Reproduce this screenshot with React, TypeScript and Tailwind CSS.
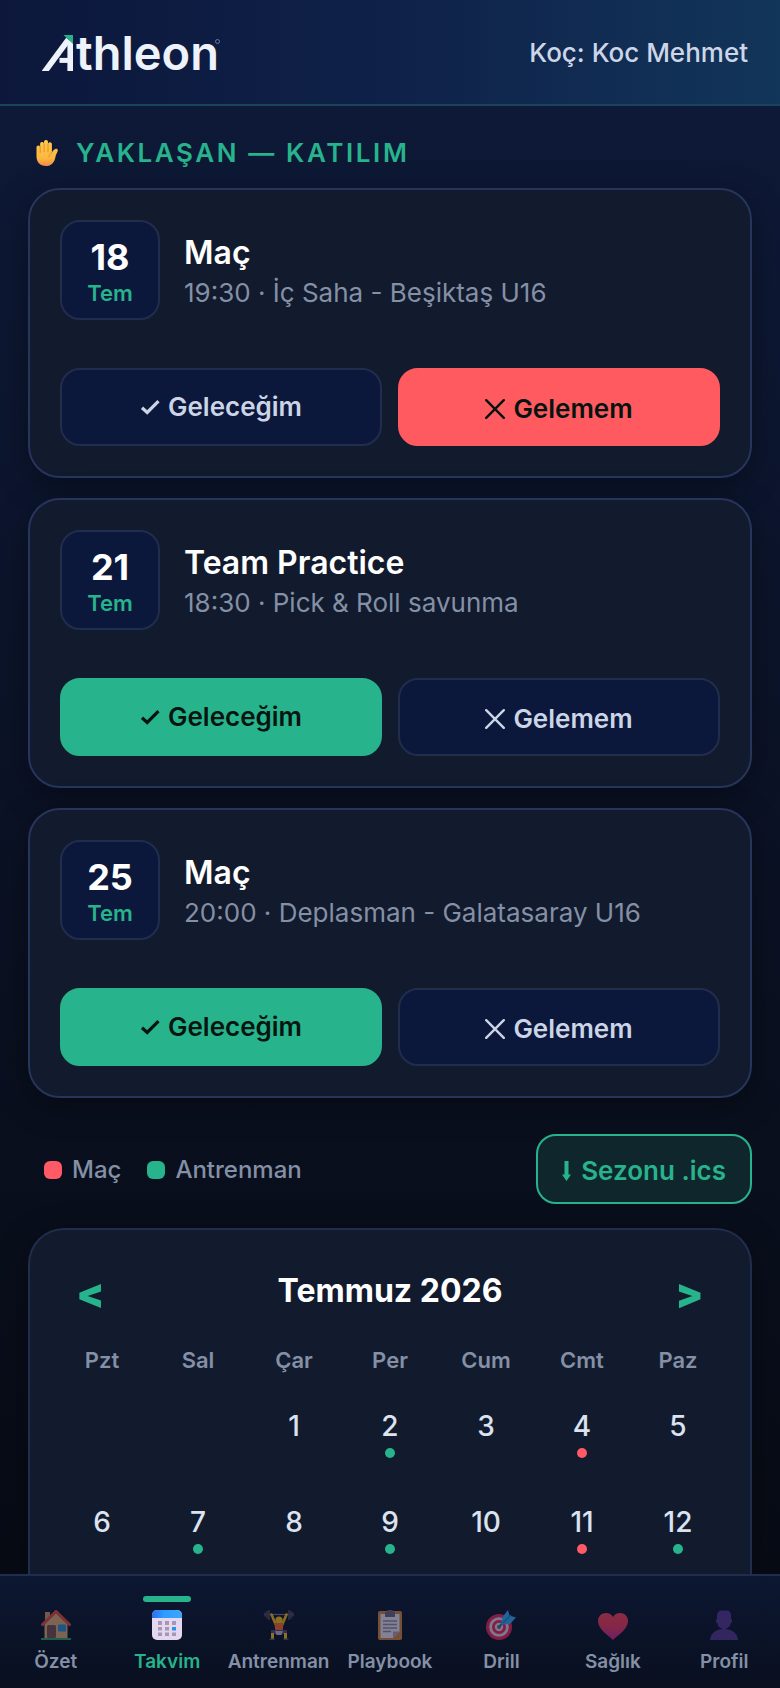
import React from "react";

type Answer = "yes" | "no";

interface UpcomingEvent {
  day: string;
  month: string;
  title: string;
  detail: string;
  answer: Answer;
}

interface CalendarDay {
  day: number | null;
  kind?: "match" | "training";
}

const events: UpcomingEvent[] = [
  {
    day: "18",
    month: "Tem",
    title: "Maç",
    detail: "19:30 · İç Saha - Beşiktaş U16",
    answer: "no",
  },
  {
    day: "21",
    month: "Tem",
    title: "Team Practice",
    detail: "18:30 · Pick & Roll savunma",
    answer: "yes",
  },
  {
    day: "25",
    month: "Tem",
    title: "Maç",
    detail: "20:00 · Deplasman - Galatasaray U16",
    answer: "yes",
  },
];

const weekdays = ["Pzt", "Sal", "Çar", "Per", "Cum", "Cmt", "Paz"];

const weeks: CalendarDay[][] = [
  [
    { day: null },
    { day: null },
    { day: 1 },
    { day: 2, kind: "training" },
    { day: 3 },
    { day: 4, kind: "match" },
    { day: 5 },
  ],
  [
    { day: 6 },
    { day: 7, kind: "training" },
    { day: 8 },
    { day: 9, kind: "training" },
    { day: 10 },
    { day: 11, kind: "match" },
    { day: 12, kind: "training" },
  ],
];

const Logo = () => (
  <a href="#" aria-label="Athleon" className="flex items-end text-[#eef2fb]">
    <svg width="32" height="36" viewBox="0 0 32 36" fill="none" aria-hidden="true">
      <path d="M1 39 L26.5 4.500" stroke="currentColor" strokeWidth="5.8" />
      <path d="M28.200 6 V36" stroke="currentColor" strokeWidth="5.6" />
      <path d="M17.500 25.400 H27" stroke="currentColor" strokeWidth="5" />
      <path d="M21.500 0 H31 V9 Z" fill="#27b18b" />
    </svg>
    <span className="ml-[2px] -mb-[2px] text-[47px] leading-[40px] font-semibold">thleon</span>
    <svg width="5" height="5" viewBox="0 0 5 5" className="-ml-1 mb-[27px]" aria-hidden="true">
      <circle cx="2.5" cy="2.5" r="2" fill="none" stroke="#7f8bab" strokeWidth="0.8" />
    </svg>
  </a>
);

const HandIcon = () => (
  <svg width="22" height="26" viewBox="0 0 22 26" aria-hidden="true">
    <defs>
      <linearGradient id="palm" x1="0" y1="0" x2="0" y2="1">
        <stop offset="0" stopColor="#ffc94a" />
        <stop offset="0.7" stopColor="#fdb73f" />
        <stop offset="1" stopColor="#f08a4b" />
      </linearGradient>
    </defs>
    <path
      d="M0.5 7.5c0-2.4 3.3-2.7 3.6-.3V4c0-2.6 3.700-2.600 3.900-.2V1.900C8.200-.5 11.900-.5 12 1.900V4c.3-2.500 3.900-2.300 3.900.2v8.200c1-1.800 2-3.200 3.500-3.500 1.600-.3 2.700.6 2.400 1.800-.6 2.200-1.700 3-2.200 5.500C18.600 22.500 15.500 26 9.800 26 4 26 .5 22 .5 16.500Z"
      fill="url(#palm)"
    />
    <path
      d="M4.200 6v6.500M8.100 4v7.800M12 4v8M15.900 12.400c-1.500 1-2.800 2.500-3 4.600"
      fill="none"
      stroke="#dd8b2c"
      strokeWidth="0.9"
      strokeLinecap="round"
    />
  </svg>
);

const CheckIcon = () => (
  <svg width="20" height="16" viewBox="0 0 20 16" fill="none" aria-hidden="true">
    <path d="M2 8.800 7.200 13.500 18.500 2.200" stroke="currentColor" strokeWidth="3.200" />
  </svg>
);

const CrossIcon = () => (
  <svg width="20" height="20" viewBox="0 0 20 20" fill="none" aria-hidden="true">
    <path
      d="M1.200 1.200 18.800 18.800M18.800 1.200 1.200 18.800"
      stroke="currentColor"
      strokeWidth="2.400"
      strokeLinecap="round"
    />
  </svg>
);

const HouseIcon = () => (
  <svg width="30" height="30" viewBox="0 0 30 30" aria-hidden="true">
    <path d="M4 2h5v9H4z" fill="#c98f5e" />
    <path d="M3.500 14 15 3l11.500 11v14h-23z" fill="#d9a577" />
    <path d="M0.500 15.500 15 1.500l14.500 14" fill="none" stroke="#dc4b40" strokeWidth="3" />
    <rect x="6" y="15" width="9" height="13" rx="1.500" fill="#7a4c50" />
    <rect x="17" y="14.500" width="8" height="7" rx="0.800" fill="#2b8ed0" />
    <path d="M0 28h30v2H0z" fill="#2f9e63" />
  </svg>
);

const CalendarIcon = () => (
  <svg width="30" height="30" viewBox="0 0 30 30" aria-hidden="true">
    <defs>
      <linearGradient id="calTop" x1="0" y1="0" x2="1" y2="0">
        <stop offset="0" stopColor="#2b6df3" />
        <stop offset="0.4" stopColor="#2f9cff" />
        <stop offset="1" stopColor="#3aa6ff" />
      </linearGradient>
    </defs>
    <rect width="30" height="30" rx="5" fill="#e3d8f0" />
    <path d="M0 8V5a5 5 0 0 1 5-5h20a5 5 0 0 1 5 5v3z" fill="url(#calTop)" />
    <g fill="#a698b5">
      <path d="M6 11h4v4H6zM13 11h4v4h-4zM20 11h4v4h-4z" />
      <path d="M6 17h4v3.500H6zM13 17h4v3.500h-4z" />
      <path d="M6 22.500h4V26H6zM13 22.500h4V26h-4zM20 22.500h4V26h-4z" />
    </g>
    <path d="M20 17h4v3.500h-4z" fill="#2f8ff0" />
  </svg>
);

const LifterIcon = () => (
  <svg width="30" height="30" viewBox="0 0 30 30" aria-hidden="true">
    <path d="M1 4.500h28" stroke="#7c7590" strokeWidth="1.200" />
    <path
      d="M1 2.500v4M3 1v7.500M5 0v10M25 0v10M27 1v7.500M29 2.500v4"
      stroke="#4e435e"
      strokeWidth="1.700"
    />
    <path
      d="M7.500 4.500 11.500 14M22.500 4.500 18.500 14"
      stroke="#f2b619"
      strokeWidth="2.600"
      strokeLinecap="round"
    />
    <circle cx="15" cy="10" r="3.600" fill="#f4b81c" />
    <path d="M10.500 13h9l-.8 8.500h-7.400z" fill="#f0682c" />
    <path d="M7 20h16v4H7z" fill="#54437c" />
    <path d="M11 21h8l-1.500 4h-5z" fill="#b9afd0" />
    <path d="M8.500 23v6M21.500 23v6" stroke="#f2c21c" strokeWidth="3" />
    <path d="M5.500 29.200h5M19.500 29.200h5" stroke="#5a4a6c" strokeWidth="1.600" />
  </svg>
);

const ClipboardIcon = () => (
  <svg width="30" height="30" viewBox="0 0 30 30" aria-hidden="true">
    <rect x="3" y="1" width="24" height="29" rx="1.800" fill="#d0803f" />
    <path d="M5.500 4h19v17.500L18 28H5.500z" fill="#e4dcee" />
    <path d="M18 28v-6.500h6.500z" fill="#a89bb8" />
    <path d="M12 2a3 2.500 0 0 1 6 0h2v5H10V2z" fill="#6b6478" />
    <path d="M8 11h14M8 14.500h14M8 18h14M8 21.500h8" stroke="#8f84a3" strokeWidth="1.500" />
  </svg>
);

const TargetIcon = () => (
  <svg width="30" height="30" viewBox="0 0 30 30" aria-hidden="true">
    <circle cx="13" cy="17" r="13" fill="#e8265c" />
    <circle cx="13" cy="17" r="9.800" fill="#d9cde0" />
    <circle cx="13" cy="17" r="7" fill="#e8265c" />
    <circle cx="13" cy="17" r="4.200" fill="#d9cde0" />
    <circle cx="13" cy="17" r="2" fill="#8d5f80" />
    <path d="M13 17 21 8" stroke="#1b76b8" strokeWidth="2" />
    <path d="M15 14.500 16.500 7 22 0l1.500 5.500L30 7.500l-6 6.500z" fill="#35a6f0" />
    <path d="M17 13 25 5" stroke="#1d78c0" strokeWidth="1.200" />
  </svg>
);

const HeartIcon = () => (
  <svg width="30" height="30" viewBox="0 0 30 30" aria-hidden="true">
    <defs>
      <linearGradient id="heart" x1="0" y1="0" x2="0" y2="1">
        <stop offset="0" stopColor="#f5405a" />
        <stop offset="0.500" stopColor="#e8365f" />
        <stop offset="1" stopColor="#c22aa0" />
      </linearGradient>
    </defs>
    <path
      d="M15 30C12 26.500 0 20 0 11 0 6.500 3.500 3 8 3c3 0 5.500 1.500 7 4 1.500-2.500 4-4 7-4 4.500 0 8 3.500 8 8 0 9-12 15.500-15 19z"
      fill="url(#heart)"
    />
  </svg>
);

const PersonIcon = () => (
  <svg width="30" height="30" viewBox="0 0 30 30" aria-hidden="true">
    <path
      d="M8 5.500C8 2.500 10 .5 12.500.5h5C20.500.500 22 2.500 22 5.500V9c1.500 0 1.500 4-.2 4-.6 3.500-3 6-6.800 6s-6.200-2.500-6.800-6C6.500 13 6.500 9 8 9z"
      fill="#54368f"
    />
    <path d="M1 30c.5-6.500 5.500-11 14-11s13.500 4.500 14 11z" fill="#54368f" />
  </svg>
);

const navItems = [
  { label: "Özet", icon: <HouseIcon /> },
  { label: "Takvim", icon: <CalendarIcon />, active: true },
  { label: "Antrenman", icon: <LifterIcon /> },
  { label: "Playbook", icon: <ClipboardIcon /> },
  { label: "Drill", icon: <TargetIcon /> },
  { label: "Sağlık", icon: <HeartIcon /> },
  { label: "Profil", icon: <PersonIcon /> },
];

const answerBase =
  "flex flex-1 items-center justify-center gap-2 rounded-[20px] border-2 text-[26px] leading-9 font-semibold";
const answerIdle = "border-[#212d4d] bg-[#0c183b] text-[#cbd5e6]";

const monthButton =
  "w-[74px] pt-2 font-['Roboto',sans-serif] text-[50px] leading-[56px] font-black text-[#27b38c]";

const EventCard: React.FC<UpcomingEvent> = ({ day, month, title, detail, answer }) => (
  <article className="rounded-[32px] border-2 border-[#27345c] bg-[#121a2d] p-[30px] shadow-[0_8px_32px_rgba(0,0,0,0.35)]">
    <div className="flex items-center gap-6">
      <div className="flex size-[100px] shrink-0 flex-col items-center justify-center rounded-[20px] border-2 border-[#212d4d] bg-[#0c183b] pt-[6px]">
        <span className="text-[36px] leading-9 font-bold text-white">{day}</span>
        <span className="mt-1 text-[22px] leading-7 font-semibold text-[#27b38c]">{month}</span>
      </div>
      <div className="pt-[6px]">
        <h2 className="text-[32px] leading-10 font-semibold text-white">{title}</h2>
        <p className="text-[26px] leading-10 text-[#8490a6]">{detail}</p>
      </div>
    </div>
    <div className="mt-12 flex gap-4">
      <button
        type="button"
        aria-pressed={answer === "yes"}
        className={`${answerBase} py-[19px] ${
          answer === "yes" ? "border-[#27b38c] bg-[#27b38c] text-[#04140f]" : answerIdle
        }`}
      >
        <CheckIcon />
        Geleceğim
      </button>
      <button
        type="button"
        aria-pressed={answer === "no"}
        className={`${answerBase} pt-[21px] pb-[17px] ${
          answer === "no" ? "border-[#ff5a5f] bg-[#ff5a5f] text-[#04140f]" : answerIdle
        }`}
      >
        <CrossIcon />
        Gelemem
      </button>
    </div>
  </article>
);

const Calendar = () => (
  <section className="flex-1 rounded-t-[36px] border-2 border-b-0 border-[#212d4d] bg-[#121a2d] px-6 pt-6 shadow-[0_8px_32px_rgba(0,0,0,0.35)]">
    <div className="mb-3 flex h-[72px] items-center justify-between">
      <button type="button" aria-label="Önceki ay" className={monthButton}>
        &lt;
      </button>
      <h2 className="pt-[2px] text-[32px] leading-[42px] font-bold text-white">Temmuz 2026</h2>
      <button type="button" aria-label="Sonraki ay" className={monthButton}>
        &gt;
      </button>
    </div>
    <table className="w-full table-fixed border-collapse text-center">
      <thead>
        <tr>
          {weekdays.map((name) => (
            <th
              key={name}
              scope="col"
              className="p-0 text-[22px] leading-[44px] font-semibold text-[#8490a6]"
            >
              {name}
            </th>
          ))}
        </tr>
      </thead>
      <tbody>
        {weeks.map((week, row) => (
          <tr key={row}>
            {week.map(({ day, kind }, col) => (
              <td key={col} className="h-24 p-0 align-top">
                <div className="flex flex-col items-center gap-1 pt-[26px] text-[28px] leading-9 font-medium text-[#dbe2f0]">
                  {day}
                  {kind && (
                    <span
                      className={`size-[10px] rounded-full ${
                        kind === "match" ? "bg-[#ff5a66]" : "bg-[#27b38c]"
                      }`}
                    />
                  )}
                </div>
              </td>
            ))}
          </tr>
        ))}
      </tbody>
    </table>
  </section>
);

export default function App() {
  return (
    <div className="flex h-screen flex-col bg-linear-to-b from-[#0e1a3a] via-[#0a1020] via-60% to-[#070a12] font-['Inter',sans-serif]">
      <header className="flex items-center justify-between border-b-2 border-[#1a4459] bg-linear-to-r from-[#0c173b] via-[#0f2149] to-[#12355a] py-8 pr-8 pl-[42px]">
        <Logo />
        <p className="pt-[2px] text-[26px] leading-[38px] font-medium text-[#cdd6e8]">
          Koç: Koc Mehmet
        </p>
      </header>

      <main className="flex min-h-0 flex-1 flex-col overflow-hidden px-7 pt-[30px]">
        <h1 className="mb-[18px] flex items-center gap-[18px] pl-2 text-[26px] leading-[34px] font-semibold tracking-widest text-[#27b38c]">
          <HandIcon />
          YAKLAŞAN — KATILIM
        </h1>

        <div className="flex flex-col gap-5">
          {events.map((event) => (
            <EventCard key={event.day} {...event} />
          ))}
        </div>

        <div className="mt-9 mb-6 flex items-center justify-between pl-4">
          <ul className="flex gap-[26px] pt-[2px] text-[24px] leading-8 font-medium text-[#8490a6]">
            <li className="flex items-center gap-[10px]">
              <span className="size-[18px] rounded-md bg-[#ff5a66]" />
              Maç
            </li>
            <li className="flex items-center gap-[10px]">
              <span className="size-[18px] rounded-md bg-[#27b38c]" />
              Antrenman
            </li>
          </ul>
          <button
            type="button"
            className="flex items-center gap-[10px] rounded-[20px] border-2 border-[#27b38c] bg-[#10262d] px-6 pt-[17px] pb-[13px] text-[26px] leading-9 font-semibold text-[#27b38c]"
          >
            <svg width="9" height="20" viewBox="0 0 9 20" fill="currentColor" aria-hidden="true">
              <path d="M2.500 0h4v13.500H9L4.500 20 0 13.500h2.500z" />
            </svg>
            Sezonu .ics
          </button>
        </div>

        <Calendar />
      </main>

      <nav className="border-t-2 border-[#212d4d] bg-linear-to-b from-[#0c1732] to-[#090f1f]">
        <ul className="grid grid-cols-7">
          {navItems.map(({ label, icon, active }) => (
            <li key={label}>
              <a
                href="#"
                aria-current={active ? "page" : undefined}
                className="relative flex flex-col items-center gap-2 pt-[34px] pb-3"
              >
                {active && (
                  <span className="absolute top-5 h-[6px] w-12 rounded-full bg-[#27b38c]" />
                )}
                <span className={active ? "" : "opacity-55"}>{icon}</span>
                <span
                  className={`text-[19px] leading-7 font-semibold ${
                    active ? "text-[#27b38c]" : "text-[#8490a6]"
                  }`}
                >
                  {label}
                </span>
              </a>
            </li>
          ))}
        </ul>
      </nav>
    </div>
  );
}
